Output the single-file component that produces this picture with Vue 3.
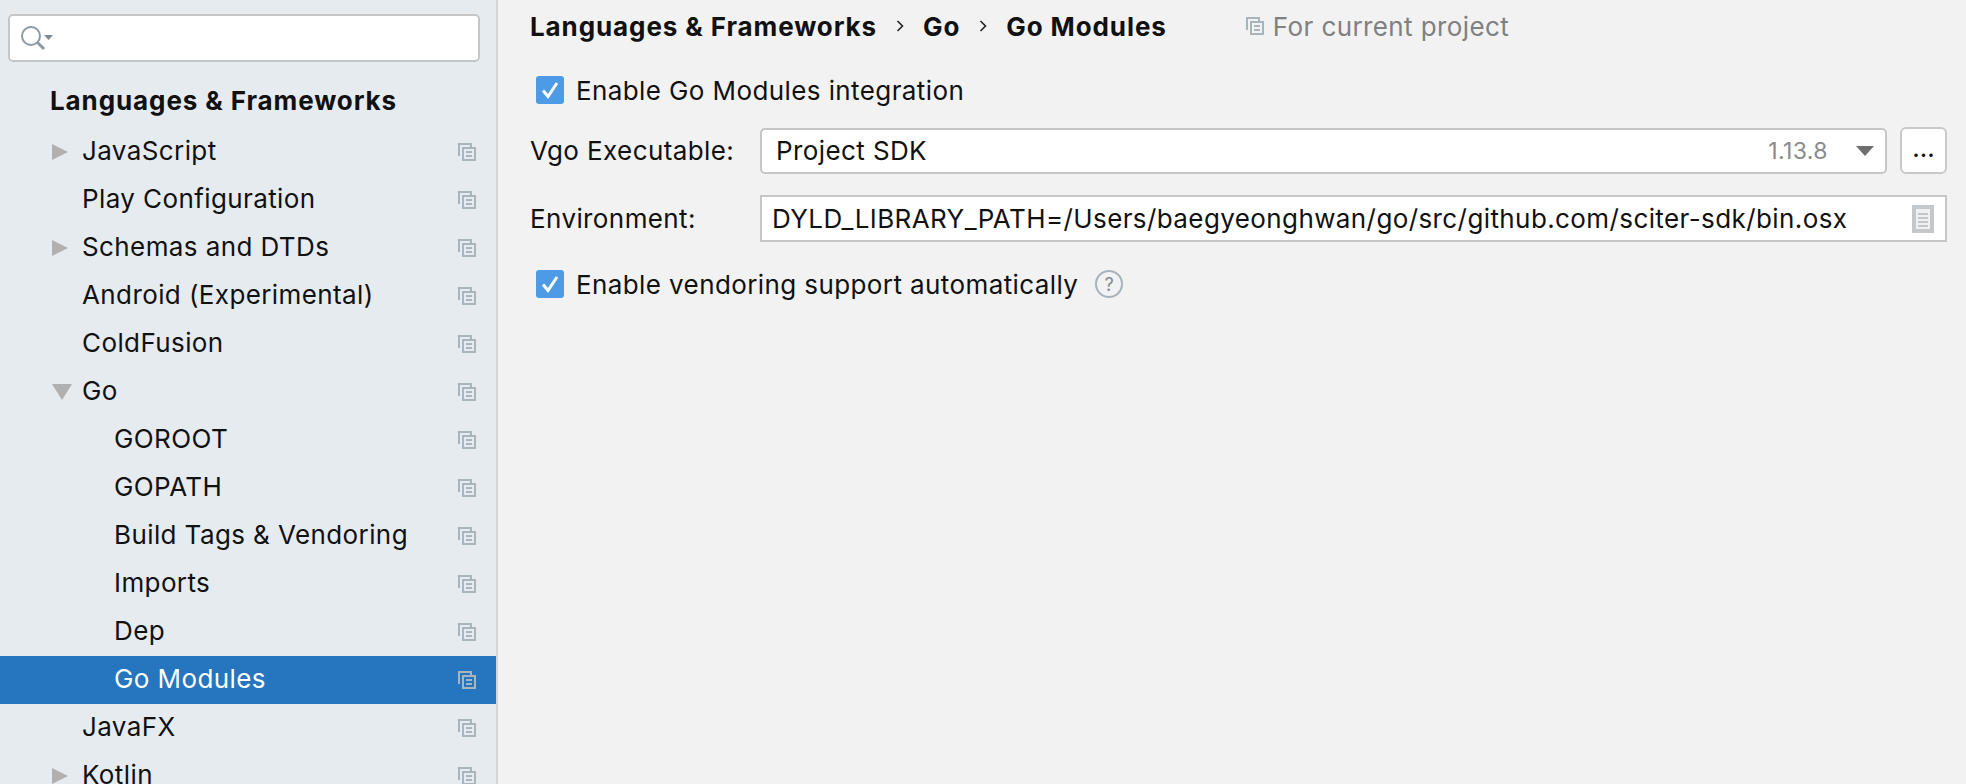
<script setup>
const items = [
  { name: 'JavaScript', level: 0, arrow: 'right' },
  { name: 'Play Configuration', level: 0 },
  { name: 'Schemas and DTDs', level: 0, arrow: 'right' },
  { name: 'Android (Experimental)', level: 0 },
  { name: 'ColdFusion', level: 0 },
  { name: 'Go', level: 0, arrow: 'down' },
  { name: 'GOROOT', level: 1 },
  { name: 'GOPATH', level: 1 },
  { name: 'Build Tags & Vendoring', level: 1 },
  { name: 'Imports', level: 1 },
  { name: 'Dep', level: 1 },
  { name: 'Go Modules', level: 1, selected: true },
  { name: 'JavaFX', level: 0 },
  { name: 'Kotlin', level: 0, arrow: 'right' }
]
</script>

<template>
  <div class="window">
    <aside class="sidebar">
      <div class="search">
        <svg width="34" height="26" viewBox="0 0 34 26">
          <circle cx="11" cy="11" r="9" fill="none" stroke="#8d9aa3" stroke-width="2" />
          <path d="M17.5 17.5L24 24" stroke="#8d9aa3" stroke-width="3" />
          <path d="M24 10h9l-4.5 5z" fill="#7d8890" />
        </svg>
      </div>
      <div class="group-title">Languages &amp; Frameworks</div>
      <div
        v-for="item in items"
        :key="item.name"
        class="row"
        :class="{ selected: item.selected, nested: item.level === 1 }"
      >
        <span class="arrow">
          <svg v-if="item.arrow === 'right'" width="16" height="20" viewBox="0 0 16 20">
            <path d="M0 2l16 8-16 8z" fill="#b0b0b0" />
          </svg>
          <svg v-if="item.arrow === 'down'" width="20" height="16" viewBox="0 0 20 16">
            <path d="M0 0h20l-10 16z" fill="#b0b0b0" />
          </svg>
        </span>
        <span class="name">{{ item.name }}</span>
        <svg class="copy" width="18" height="18" viewBox="0 0 18 18">
          <path d="M1 13V1h12v3" fill="none" stroke="#a9b5bd" stroke-width="2" />
          <rect x="5" y="5" width="12" height="12" fill="none" stroke="#a9b5bd" stroke-width="2" />
          <path d="M8 9h6M8 13h6" stroke="#a9b5bd" stroke-width="2" />
        </svg>
      </div>
    </aside>

    <main class="panel">
      <div class="crumbs">
        <b>Languages &amp; Frameworks</b>
        <svg width="8" height="14" viewBox="0 0 8 14"><path d="M1.5 2l5 5-5 5" fill="none" stroke="#222" stroke-width="1.6" /></svg>
        <b>Go</b>
        <svg width="8" height="14" viewBox="0 0 8 14"><path d="M1.5 2l5 5-5 5" fill="none" stroke="#222" stroke-width="1.6" /></svg>
        <b>Go Modules</b>
        <span class="scope">
          <svg width="18" height="18" viewBox="0 0 18 18">
            <path d="M1 13V1h12v3" fill="none" stroke="#a9b5bd" stroke-width="2" />
            <rect x="5" y="5" width="12" height="12" fill="none" stroke="#a9b5bd" stroke-width="2" />
            <path d="M8 9h6M8 13h6" stroke="#a9b5bd" stroke-width="2" />
          </svg>
          For current project
        </span>
      </div>

      <label class="check first">
        <span class="box">
          <svg width="18" height="20" viewBox="0 0 18 20"><path d="M2 10.5l5 6L16 3" fill="none" stroke="#fff" stroke-width="3" /></svg>
        </span>
        Enable Go Modules integration
      </label>

      <div class="field vgo">
        <span class="label">Vgo Executable:</span>
        <div class="select">
          <span class="value">Project SDK</span>
          <span class="version">1.13.8</span>
          <svg width="18" height="10" viewBox="0 0 18 10"><path d="M0 0h18l-9 10z" fill="#6e6e6e" /></svg>
        </div>
        <button class="more">...</button>
      </div>

      <div class="field env">
        <span class="label">Environment:</span>
        <div class="text-input">
          <span class="value">DYLD_LIBRARY_PATH=/Users/baegyeonghwan/go/src/github.com/sciter-sdk/bin.osx</span>
          <svg width="22" height="28" viewBox="0 0 22 28">
            <rect width="22" height="28" fill="#c4c8cb" />
            <rect x="4" y="4" width="14" height="20" fill="#eef0f1" />
            <path d="M6 9h10M6 13h10M6 17h10M6 21h10" stroke="#b5b9bc" stroke-width="1.5" />
          </svg>
        </div>
      </div>

      <label class="check second">
        <span class="box">
          <svg width="18" height="20" viewBox="0 0 18 20"><path d="M2 10.5l5 6L16 3" fill="none" stroke="#fff" stroke-width="3" /></svg>
        </span>
        Enable vendoring support automatically
        <span class="help">?</span>
      </label>
    </main>
  </div>
</template>

<style>
html, body {
  margin: 0;
  overflow: hidden;
}
</style>

<style scoped>
.window {
  display: flex;
  width: 1966px;
  height: 784px;
  overflow: hidden;
  font-family: Inter, "Liberation Sans", sans-serif;
  font-size: 26px;
  letter-spacing: 0.4px;
  color: #111;
  background: #f2f2f2;
}
.sidebar {
  width: 496px;
  flex: none;
  padding-top: 14px;
  background: #e6ebf0;
  border-right: 2px solid #d4d4d4;
}
.search {
  display: flex;
  align-items: center;
  height: 48px;
  width: 472px;
  margin-left: 8px;
  padding-left: 10px;
  box-sizing: border-box;
  background: #fff;
  border: 2px solid #c4c6c8;
  border-radius: 5px;
}
.group-title {
  height: 66px;
  line-height: 78px;
  padding-left: 50px;
  font-weight: 700;
  letter-spacing: 0.9px;
}
.row {
  display: flex;
  align-items: center;
  height: 48px;
  padding-left: 52px;
}
.row.nested .arrow {
  width: 62px;
}
.row.selected {
  background: #2675bf;
  color: #fff;
}
.arrow {
  display: flex;
  width: 30px;
  flex: none;
}
.name {
  flex: 1;
  margin-top: -3px;
}
.copy {
  margin-right: 20px;
}
.panel {
  flex: 1;
  padding-left: 32px;
}
.crumbs {
  display: flex;
  align-items: center;
  gap: 19px;
  height: 52px;
}
.crumbs b {
  font-weight: 700;
  letter-spacing: 0.9px;
}
.scope {
  display: flex;
  align-items: center;
  gap: 9px;
  margin-left: 60px;
  color: #808080;
}
.check {
  display: flex;
  align-items: center;
  padding-left: 6px;
}
.check.first {
  height: 28px;
  margin-top: 24px;
}
.check.second {
  height: 28px;
  margin-top: 28px;
}
.box {
  display: flex;
  align-items: center;
  justify-content: center;
  width: 28px;
  height: 28px;
  margin-right: 12px;
  background: #4d9ae6;
  border-radius: 3px;
}
.help {
  display: flex;
  align-items: center;
  justify-content: center;
  width: 28px;
  height: 28px;
  margin-left: 17px;
  box-sizing: border-box;
  border: 2px solid #a8b3ba;
  border-radius: 50%;
  font-size: 18px;
  color: #808a90;
}
.field {
  display: flex;
  align-items: center;
}
.field.vgo {
  margin-top: 23px;
}
.field.env {
  margin-top: 21px;
}
.label {
  width: 230px;
  flex: none;
}
.select {
  display: flex;
  align-items: center;
  width: 1127px;
  height: 46px;
  padding: 0 11px 0 14px;
  box-sizing: border-box;
  background: #fff;
  border: 2px solid #c4c6c8;
  border-radius: 5px;
}
.select .value {
  flex: 1;
}
.version {
  margin-right: 28px;
  font-size: 23px;
  color: #8a8a8a;
}
.more {
  width: 47px;
  height: 47px;
  margin-left: 13px;
  padding: 0 0 6px;
  background: #fff;
  border: 2px solid #c8c9ca;
  border-radius: 6px;
  font: inherit;
  color: #111;
}
.text-input {
  display: flex;
  align-items: center;
  justify-content: space-between;
  width: 1187px;
  height: 47px;
  padding: 0 11px 0 10px;
  box-sizing: border-box;
  background: #fff;
  border: 2px solid #c4c6c8;
}
</style>
